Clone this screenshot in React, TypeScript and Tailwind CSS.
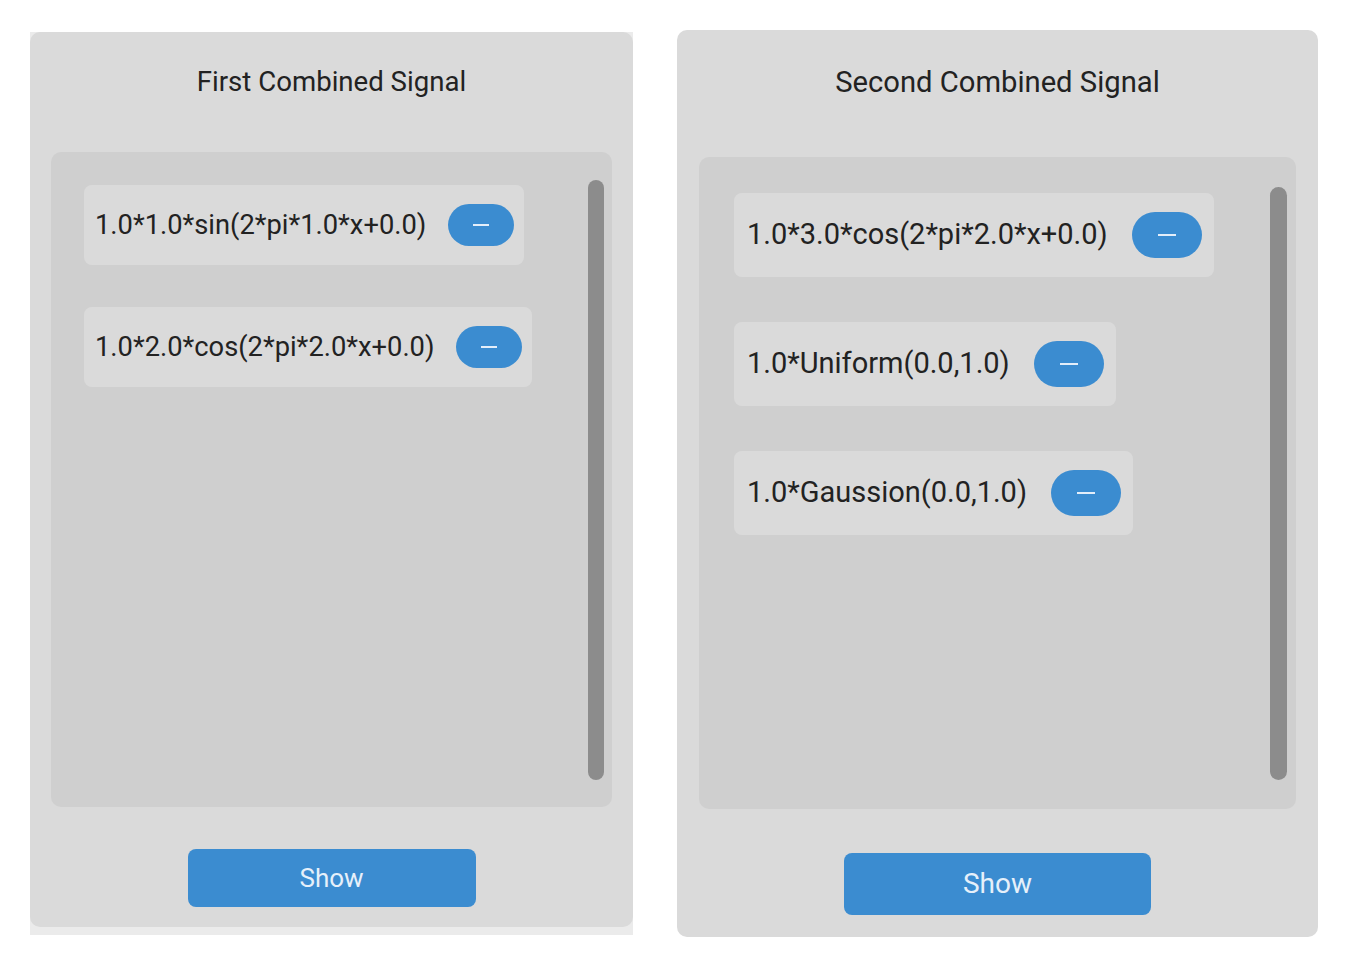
import React from 'react'

type Item = { label: string }

const firstSignals: Item[] = [
    { label: '1.0*1.0*sin(2*pi*1.0*x+0.0)' },
    { label: '1.0*2.0*cos(2*pi*2.0*x+0.0)' },
]

const secondSignals: Item[] = [
    { label: '1.0*3.0*cos(2*pi*2.0*x+0.0)' },
    { label: '1.0*Uniform(0.0,1.0)' },
    { label: '1.0*Gaussion(0.0,1.0)' },
]

function MinusButton({ big }: { big?: boolean }) {
    return (
        <button
            className={
                big
                    ? 'flex h-[46px] w-[70px] shrink-0 items-center justify-center rounded-[23px] bg-[#3b8cd0]'
                    : 'flex h-[42px] w-[66px] shrink-0 items-center justify-center rounded-[21px] bg-[#3b8cd0]'
            }
            aria-label="Remove"
        >
            <span className={big ? 'block h-[2px] w-[18px] bg-[#e3eefa]' : 'block h-[2px] w-[16px] bg-[#e3eefa]'} />
        </button>
    )
}

export default function App() {
    return (
        <div className="min-h-[970px] w-[1365px] bg-white font-['Roboto',sans-serif] text-[#222]">
            <div className="flex items-start gap-[44px] pl-[30px]">
                {/* left panel */}
                <div className="mt-[32px] w-[603px] bg-[#ebebeb] pb-[8px]">
                    <div className="flex h-[895px] flex-col rounded-[10px] bg-[#dadada] px-[21px] pb-[20px]">
                        <div className="flex h-[100px] items-center justify-center text-[27.6px]">First Combined Signal</div>
                        <div className="mt-[20px] flex h-[655px] rounded-[10px] bg-[#cfcfcf]">
                            <div className="flex flex-1 flex-col items-start gap-[42px] pl-[33px] pt-[33px]">
                                {firstSignals.map((s) => (
                                    <div
                                        key={s.label}
                                        className="flex h-[80px] items-center gap-[22px] rounded-[8px] bg-[#dadada] pl-[11px] pr-[10px] text-[27.3px]"
                                    >
                                        <span>{s.label}</span>
                                        <MinusButton />
                                    </div>
                                ))}
                            </div>
                            <div className="mb-[27px] mr-[8px] mt-[28px] w-[16px] rounded-full bg-[#8c8c8c]" />
                        </div>
                        <div className="flex flex-1 items-end justify-center">
                            <button className="h-[58px] w-[288px] rounded-[8px] bg-[#3b8cd0] text-[26px] text-[#e6f0fa]">Show</button>
                        </div>
                    </div>
                </div>

                {/* right panel */}
                <div className="mt-[30px] flex h-[907px] w-[641px] flex-col rounded-[10px] bg-[#dadada] px-[22px] pb-[22px]">
                    <div className="flex h-[106px] items-center justify-center text-[29.2px]">Second Combined Signal</div>
                    <div className="mt-[21px] flex h-[652px] rounded-[10px] bg-[#cfcfcf]">
                        <div className="flex flex-1 flex-col items-start gap-[45px] pl-[35px] pt-[36px]">
                            {secondSignals.map((s) => (
                                <div
                                    key={s.label}
                                    className="flex h-[84px] items-center gap-[24px] rounded-[8px] bg-[#dadada] pl-[13px] pr-[12px] text-[29px]"
                                >
                                    <span>{s.label}</span>
                                    <MinusButton big />
                                </div>
                            ))}
                        </div>
                        <div className="mb-[29px] mr-[9px] mt-[30px] w-[17px] rounded-full bg-[#8c8c8c]" />
                    </div>
                    <div className="flex flex-1 items-end justify-center">
                        <button className="h-[62px] w-[307px] rounded-[8px] bg-[#3b8cd0] text-[28px] text-[#e6f0fa]">Show</button>
                    </div>
                </div>
            </div>
        </div>
    )
}
